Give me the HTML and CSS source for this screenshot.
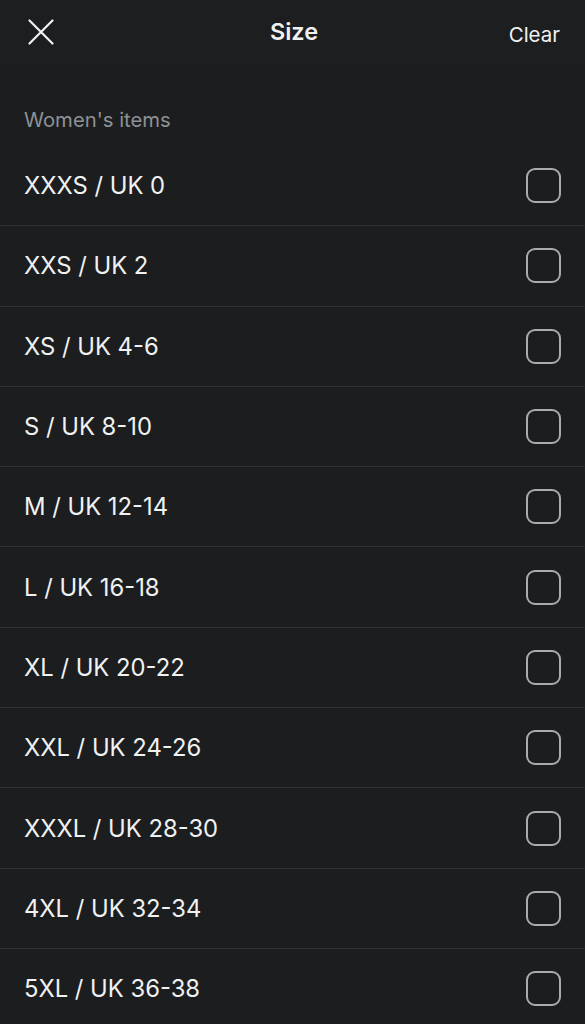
FILE: index.html
```html
<!DOCTYPE html>
<html>
<head>
<meta charset="utf-8">
<link rel="stylesheet" href="styles.css">
</head>
<body>
<div class="page">
  <header class="topbar">
    <button class="close" aria-label="Close">
      <svg width="26" height="26" viewBox="0 0 26 26"><path d="M1.5 1.5 L24.5 24.5 M24.5 1.5 L1.5 24.5" stroke="#f2f2f2" stroke-width="2.2" stroke-linecap="round" fill="none"/></svg>
    </button>
    <div class="title">Size</div>
    <div class="clear">Clear</div>
  </header>
  <div class="section">Women's items</div>
  <ul class="list">
    <li class="row"><span>XXXS / UK 0</span><span class="box"></span></li>
    <li class="row"><span>XXS / UK 2</span><span class="box"></span></li>
    <li class="row"><span>XS / UK 4-6</span><span class="box"></span></li>
    <li class="row"><span>S / UK 8-10</span><span class="box"></span></li>
    <li class="row"><span>M / UK 12-14</span><span class="box"></span></li>
    <li class="row"><span>L / UK 16-18</span><span class="box"></span></li>
    <li class="row"><span>XL / UK 20-22</span><span class="box"></span></li>
    <li class="row"><span>XXL / UK 24-26</span><span class="box"></span></li>
    <li class="row"><span>XXXL / UK 28-30</span><span class="box"></span></li>
    <li class="row"><span>4XL / UK 32-34</span><span class="box"></span></li>
    <li class="row"><span>5XL / UK 36-38</span><span class="box"></span></li>
  </ul>
</div>
</body>
</html>
```
FILE: styles.css
```css
html, body {
  margin: 0;
  padding: 0;
  background: #1b1d1f;
}
body {
  font-family: Inter, "Liberation Sans", Arial, sans-serif;
  color: #f0f1f1;
  overflow: hidden;
}
.page {
  width: 585px;
  height: 1024px;
  overflow: hidden;
}
.topbar {
  height: 65px;
  display: grid;
  grid-template-columns: 1fr auto 1fr;
  align-items: center;
  padding: 0 25px 0 28px;
  box-sizing: border-box;
  background: #1c1e20;
}
.close {
  background: none;
  border: 0;
  padding: 0;
  width: 26px;
  height: 26px;
  display: flex;
  justify-self: start;
  margin-top: -2px;
}
.title {
  font-size: 23.5px;
  font-weight: 600;
  margin-top: -2px;
}
.clear {
  justify-self: end;
  font-size: 20.5px;
  margin-top: 4px;
}
.section {
  height: 81px;
  box-sizing: border-box;
  padding: 42px 0 0 24px;
  font-size: 20.3px;
  color: #8e9194;
}
.list {
  list-style: none;
  margin: 0;
  padding: 0;
}
.row {
  height: 79.3px;
  border-bottom: 1px solid #2e3133;
  display: flex;
  align-items: center;
  justify-content: space-between;
  padding: 0 24px;
  font-size: 23.8px;
}
.box {
  width: 31px;
  height: 31px;
  border: 2px solid #a9abad;
  border-radius: 9px;
}
```
